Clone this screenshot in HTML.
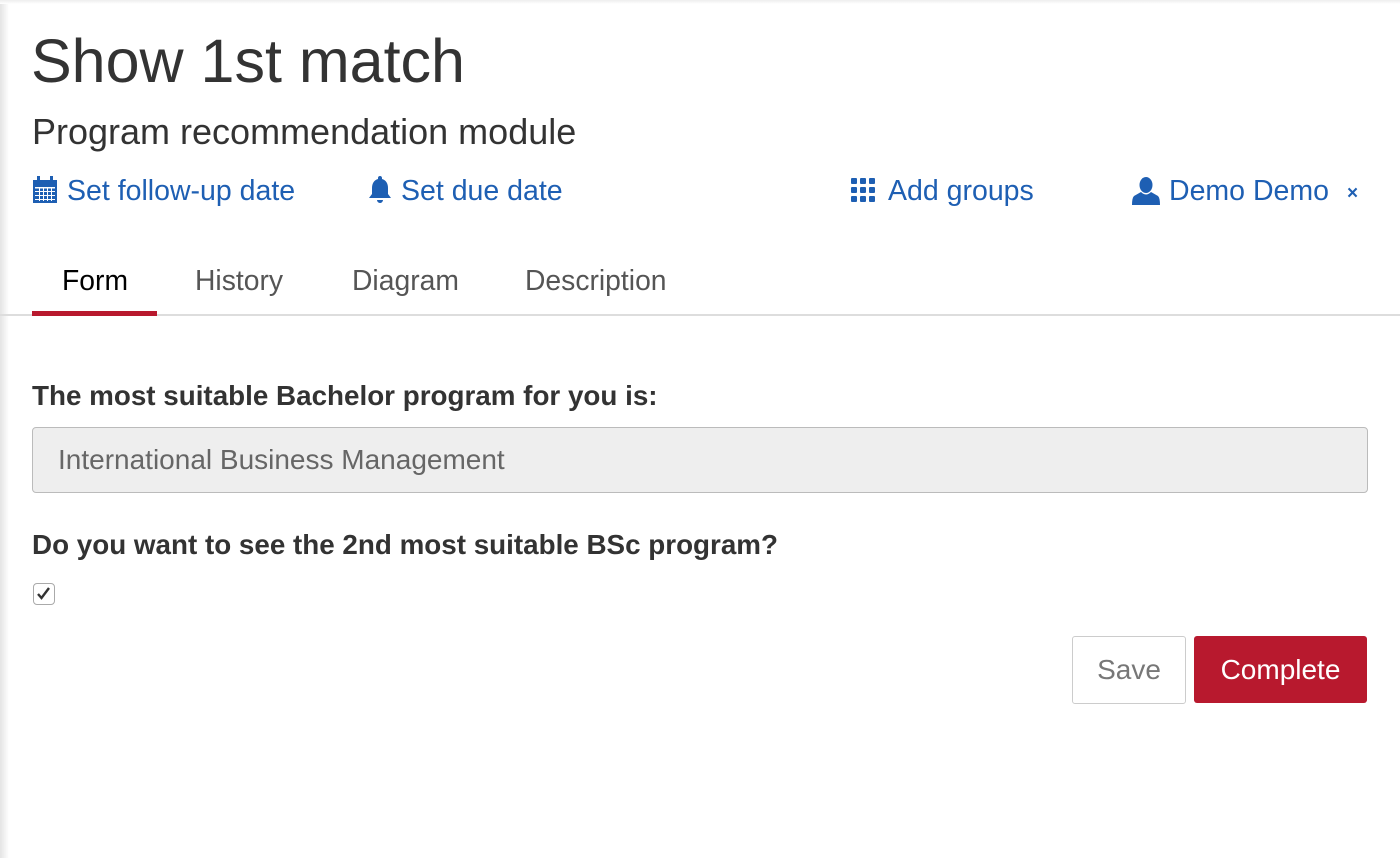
<!DOCTYPE html>
<html><head><meta charset="utf-8"><style>
body{margin:0;width:1400px;height:858px;background:#fff;font-family:"Liberation Sans",sans-serif;position:relative;overflow:hidden;color:#333}
.shadowL{position:absolute;left:0;top:0;width:9px;height:858px;background:linear-gradient(to right,#e4e4e4,#fff)}
.shadowT{position:absolute;left:0;top:0;width:1400px;height:4px;background:linear-gradient(to bottom,#eee,#fff)}
.a{position:absolute;white-space:nowrap}
.link{color:#1e5fb3;font-size:28.5px}
.tab{font-size:28.3px;color:#555;top:264px}
</style></head><body>
<div class="shadowL"></div><div class="shadowT"></div>
<div class="a" style="left:31px;top:26px;font-size:61px;color:#333">Show 1st match</div>
<div class="a" style="left:32px;top:111px;font-size:36px;color:#333">Program recommendation module</div>

<div class="a" style="left:32px;top:176px"><svg width="26" height="28" viewBox="0 0 26 28"><rect x="1" y="4" width="24" height="23" fill="#1e5fb3"/><rect x="5" y="0" width="3" height="6" fill="#1e5fb3"/><rect x="18" y="0" width="3" height="6" fill="#1e5fb3"/><g fill="#fff"><rect x="3" y="11" width="20" height="1.5"/><rect x="3" y="15" width="20" height="1"/><rect x="3" y="19" width="20" height="1"/><rect x="3" y="23" width="20" height="1"/><rect x="7" y="11" width="1" height="14"/><rect x="11" y="11" width="1" height="14"/><rect x="15" y="11" width="1" height="14"/><rect x="19" y="11" width="1" height="14"/></g></svg></div>
<div class="a link" style="left:67px;top:175px">Set follow-up date</div>
<div class="a" style="left:367px;top:175px"><svg width="26" height="30" viewBox="0 0 26 30"><path d="M13 1c-1.2 0-2 .8-2 2v1C7 5 5 8.5 5 13v6l-3 4h22l-3-4v-6c0-4.5-2-8-6-9V3c0-1.2-.8-2-2-2z M10 25a3 3 0 0 0 6 0z" fill="#1e5fb3"/></svg></div>
<div class="a link" style="left:401px;top:175px">Set due date</div>
<div class="a" style="left:851px;top:178px"><svg width="26" height="26" viewBox="0 0 26 26" fill="#1e5fb3"><rect x="0" y="0" width="6" height="6" rx="1"/><rect x="9" y="0" width="6" height="6" rx="1"/><rect x="18" y="0" width="6" height="6" rx="1"/><rect x="0" y="9" width="6" height="6" rx="1"/><rect x="9" y="9" width="6" height="6" rx="1"/><rect x="18" y="9" width="6" height="6" rx="1"/><rect x="0" y="18" width="6" height="6" rx="1"/><rect x="9" y="18" width="6" height="6" rx="1"/><rect x="18" y="18" width="6" height="6" rx="1"/></svg></div>
<div class="a link" style="left:888px;top:175px">Add groups</div>
<div class="a" style="left:1132px;top:177px"><svg width="28" height="28" viewBox="0 0 28 28" fill="#1e5fb3"><ellipse cx="14" cy="8" rx="6.5" ry="8"/><path d="M9 15 Q14 20 19 15 L26 19 Q28 21 28 28 L0 28 Q0 21 2 19z"/></svg></div>
<div class="a link" style="left:1169px;top:175px">Demo Demo</div>
<div class="a" style="left:1347px;top:183px;font-size:19px;font-weight:bold;color:#1e5fb3">×</div>

<div class="a tab" style="left:62px;color:#000">Form</div>
<div class="a tab" style="left:195px">History</div>
<div class="a tab" style="left:352px">Diagram</div>
<div class="a tab" style="left:525px">Description</div>
<div class="a" style="left:0;top:314px;width:1400px;height:2px;background:#ddd"></div>
<div class="a" style="left:32px;top:311px;width:125px;height:5px;background:#b8192e"></div>

<div class="a" style="left:32px;top:380px;font-size:27.8px;font-weight:bold;color:#333">The most suitable Bachelor program for you is:</div>
<div class="a" style="left:32px;top:427px;width:1334px;height:64px;background:#eee;border:1px solid #bbb;border-radius:4px"></div>
<div class="a" style="left:58px;top:444px;font-size:28px;color:#666">International Business Management</div>
<div class="a" style="left:32px;top:529px;font-size:27.8px;font-weight:bold;color:#333">Do you want to see the 2nd most suitable BSc program?</div>
<div class="a" style="left:33px;top:583px;width:20px;height:20px;border:1px solid #aaa;border-radius:4px;background:#fff"></div>
<svg class="a" style="left:36px;top:587px" width="15" height="13" viewBox="0 0 15 13"><path d="M2 7l3.5 4L13 1" stroke="#333" stroke-width="2.4" fill="none"/></svg>

<div class="a" style="left:1072px;top:636px;width:112px;height:66px;border:1px solid #ccc;border-radius:3px;background:#fff;font-size:28px;color:#777;text-align:center;line-height:66px">Save</div>
<div class="a" style="left:1194px;top:636px;width:173px;height:67px;border-radius:3px;background:#b8192e;font-size:28px;color:#fff;text-align:center;line-height:67px">Complete</div>
</body></html>
